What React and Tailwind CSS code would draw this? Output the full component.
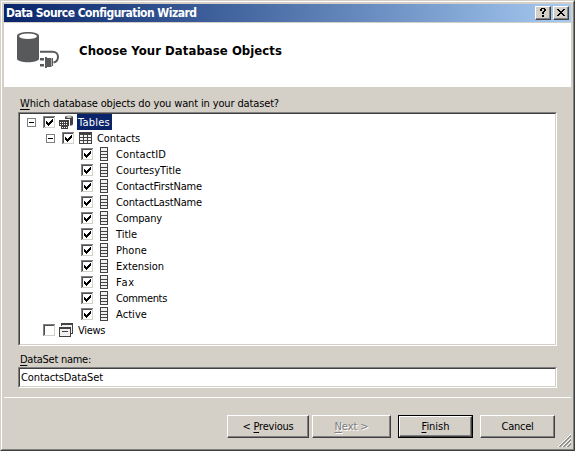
import React from "react";

const columns = [
  ["ContactID", "w-[50px]"],
  ["CourtesyTitle", "w-[65px]"],
  ["ContactFirstName", "w-[86px]"],
  ["ContactLastName", "w-[86px]"],
  ["Company", "w-[46px]"],
  ["Title", "w-[21px]"],
  ["Phone", "w-[31px]"],
  ["Extension", "w-[48px]"],
  ["Fax", "w-[19px]"],
  ["Comments", "w-[51px]"],
  ["Active", "w-[31px]"],
];

function Check({ on = true }) {
  return (
    <svg width="12" height="12" viewBox="0 0 12 12" shapeRendering="crispEdges" className="shrink-0">
      <path fill="#d4d0c8" d="M0 0h12v12H0z" />
      <path fill="#808080" d="M0 0h12v1H1v11H0z" />
      <path fill="#fff" d="M1 1h10v10H1z" />
      <path fill="#505050" d="M1 1h10v1H2v9H1z" />
      {on && <path fill="#000" d="M3 5h1v3H3zM4 6h1v3H4zM5 7h1v3H5zM6 6h1v3H6zM7 5h1v3H7zM8 4h1v3H8zM9 3h1v3H9z" />}
    </svg>
  );
}

function Expander() {
  return (
    <svg width="9" height="9" viewBox="0 0 9 9" shapeRendering="crispEdges" className="shrink-0">
      <path d="M.5.5h8v8h-8z" fill="#fff" stroke="#808080" />
      <path d="M2 4h5v1H2z" />
    </svg>
  );
}

function ColumnIcon() {
  return (
    <svg width="8" height="14" viewBox="0 0 8 14" shapeRendering="crispEdges" className="shrink-0">
      <path fill="#f0f0f0" d="M0 0h8v14H0z" />
      <path fill="#424242" fillRule="evenodd" d="M0 0h8v14H0zM1 1v3h6V1zM1 5v2h6V5zM1 8v2h6V8zM1 11v2h6v-2z" />
    </svg>
  );
}

function TablesIcon() {
  return (
    <svg width="15" height="14" viewBox="0 0 15 14" className="shrink-0">
      <path fill="#424242" d="M6 2C6 .2 14 .2 14 2v7c0 1-1.500 1.500-3 1.500V4H6z" />
      <ellipse cx="10" cy="2" rx="3" ry=".8" fill="#fff" />
      <g shapeRendering="crispEdges">
        <path fill="#424242" d="M0 5h10v6H9v3H2v-3H0z" />
        <path fill="#fff" d="M1 7h1v1H1zm2 0h1v1H3zm2 0h1v1H5zm2 0h1v1H7zM1 9h1v1H1zm2 0h1v1H3zm2 0h1v1H5zm2 0h1v1H7zM3 12h1v1H3zm2 0h1v1H5zm2 0h1v1H7z" />
      </g>
    </svg>
  );
}

function TableIcon() {
  return (
    <svg width="13" height="12" viewBox="0 0 13 12" shapeRendering="crispEdges" className="shrink-0">
      <path fill="#424242" d="M0 0h13v12H0z" />
      <path fill="#f4f4f4" d="M1 3h3v2H1zm4 0h3v2H5zm4 0h3v2H9zM1 6h3v2H1zm4 0h3v2H5zm4 0h3v2H9zM1 9h3v2H1zm4 0h3v2H5zm4 0h3v2H9z" />
    </svg>
  );
}

function ViewsIcon() {
  return (
    <svg width="14" height="14" viewBox="0 0 14 14" shapeRendering="crispEdges" className="shrink-0">
      <path fill="#f0f0f0" d="M2 0h12v11H2zM0 4h12v10H0z" />
      <path fill="#424242" fillRule="evenodd" d="M2 0h12v11h-2v-1h1V2H3v1H2zM0 4h12v10H0zM1 6v7h10V6z" />
      <path fill="#424242" d="M3 8h6v1H3z" />
    </svg>
  );
}

function DatabaseIcon() {
  return (
    <svg width="43" height="37" viewBox="0 0 43 37" className="shrink-0">
      <path fill="#58595b" d="M0 4C0-1.2 22-1.2 22 4v22.500c0 5-22 5-22 0z" />
      <ellipse cx="11" cy="4.300" rx="9" ry="2.800" fill="#fff" />
      <path d="M23 19.800h12.500c3.500 0 5.500 2.200 5.500 5s-1.500 5.200-4.500 5.700" fill="none" stroke="#58595b" strokeWidth="2" />
      <path fill="#58595b" d="M23 26h4v2.500h-4zM23 32h4v2.500h-4zM28 25h2v1h4.500v9H30v1h-2zM35 26h1v8h-1z" />
    </svg>
  );
}

/* One line of text stretched to an exact advance width. */
function Label({ children, w, bold, size = "text-[11px]", className = "" }) {
  const ref = React.useRef(null);
  const [gap, setGap] = React.useState(0);
  React.useLayoutEffect(() => {
    const el = ref.current;
    setGap((el.parentElement.clientWidth - el.getBoundingClientRect().width) / el.textContent.length);
  }, []);
  return (
    <span className={`inline-block shrink-0 whitespace-pre ${w} ${size} ${bold ? "font-bold" : ""} ${className}`}>
      <span ref={ref} style={{ letterSpacing: gap }}>{children}</span>
    </span>
  );
}

function Key({ children }) {
  return <span className="underline decoration-1 underline-offset-2">{children}</span>;
}

function Button({ children, disabled, primary, className }) {
  return (
    <button
      disabled={disabled}
      className={`flex h-[23px] items-center justify-center ${primary ? "border border-black" : ""} ${className}`}
    >
      <span className="flex h-full w-full items-center justify-center border border-t-white border-l-white border-r-[#404040] border-b-[#404040] shadow-[inset_-1px_-1px_#808080]">
        {children}
      </span>
    </button>
  );
}

export default function App() {
  return (
    <div className="flex h-[451px] w-[575px] flex-col overflow-hidden border border-t-[#d4d0c8] border-l-[#d4d0c8] border-r-[#404040] border-b-[#404040] bg-[#d4d0c8] font-['DejaVu_Sans_Condensed','DejaVu_Sans',sans-serif] leading-[16px] text-black">
      <div className="relative flex h-full flex-col border border-t-white border-l-white border-r-[#808080] border-b-[#808080] p-[2px]">
        <header className="flex h-[18px] shrink-0 items-center bg-linear-to-r from-[#0a246a] to-[#a6caf0] pr-[2px] pl-[2px]">
          <Label w="w-[190px]" bold size="text-[12px]" className="text-white">Data Source Configuration Wizard</Label>
          <div className="ml-auto flex gap-[2px]">
            <button aria-label="Help" className="flex h-[14px] w-4 items-center justify-center border border-t-white border-l-white border-r-[#404040] border-b-[#404040] bg-[#d4d0c8] pb-px shadow-[inset_-1px_-1px_#808080]">
              <svg width="8" height="9" viewBox="0 0 8 9" shapeRendering="crispEdges">
                <path d="M2 0h4v1H2zM1 1h2v2H1zM5 1h2v2H5zM4 3h2v1H4zM3 4h2v2H3zM3 7h2v2H3z" />
              </svg>
            </button>
            <button aria-label="Close" className="flex h-[14px] w-4 items-center justify-center border border-t-white border-l-white border-r-[#404040] border-b-[#404040] bg-[#d4d0c8] pb-px shadow-[inset_-1px_-1px_#808080]">
              <svg width="8" height="7" viewBox="0 0 8 7" shapeRendering="crispEdges">
                <path d="M0 0h2v1H0zM6 0h2v1H6zM1 1h2v1H1zM5 1h2v1H5zM2 2h4v1H2zM3 3h2v1H3zM2 4h4v1H2zM1 5h2v1H1zM5 5h2v1H5zM0 6h2v1H0zM6 6h2v1H6z" />
              </svg>
            </button>
          </div>
        </header>
        <section className="mt-px flex h-16 shrink-0 items-start bg-white pt-[9px] pl-[13px]">
          <DatabaseIcon />
          <Label w="w-[203px]" bold size="text-[13px]" className="mt-[11px] ml-[19px]">Choose Your Database Objects</Label>
        </section>
        <main className="flex flex-col px-[14px] pt-[9px]">
          <Label w="w-[259px]" className="ml-[2px]"><Key>W</Key>hich database objects do you want in your dataset?</Label>
          <div className="h-[234px] w-[539px] border border-t-[#808080] border-l-[#808080] border-r-white border-b-white">
            <div className="h-full border border-t-[#404040] border-l-[#404040] border-r-[#d4d0c8] border-b-[#d4d0c8] bg-white">
              <div className="flex h-4 items-center pl-[7px]">
                <Expander />
                <span className="ml-[7px] -mt-px flex"><Check /></span>
                <span className="ml-1 flex"><TablesIcon /></span>
                <span className="ml-[3px] flex h-4 w-[35px] bg-[#0a246a] pl-px text-white"><Label w="w-[32px]" className="pt-px">Tables</Label></span>
              </div>
              <div className="flex h-4 items-center pl-[26px]">
                <Expander />
                <span className="ml-[7px] -mt-px flex"><Check /></span>
                <span className="ml-[5px] flex"><TableIcon /></span>
                <Label w="w-[43px]" className="ml-[5px] pt-[2px]">Contacts</Label>
              </div>
              {columns.map(([name, width]) => (
                <div key={name} className="flex h-4 items-center pl-[61px]">
                  <span className="-mt-px flex"><Check /></span>
                  <span className="ml-[7px] flex"><ColumnIcon /></span>
                  <Label w={width} className="ml-2 pt-[2px]">{name}</Label>
                </div>
              ))}
              <div className="flex h-4 items-center pl-[23px]">
                <span className="-mt-px flex"><Check on={false} /></span>
                <span className="mr-px ml-1 flex"><ViewsIcon /></span>
                <Label w="w-[27px]" className="ml-1 pt-[2px]">Views</Label>
              </div>
            </div>
          </div>
          <Label w="w-[71px]" className="-mb-px mt-[6px] ml-[2px]"><Key>D</Key>ataSet name:</Label>
          <div className="h-[21px] w-[539px] border border-t-[#808080] border-l-[#808080] border-r-white border-b-white">
            <div className="flex h-full items-center border border-t-[#404040] border-l-[#404040] border-r-[#d4d0c8] border-b-[#d4d0c8] bg-white pl-px">
              <Label w="w-[82px]">ContactsDataSet</Label>
            </div>
          </div>
        </main>
        <div className="mt-[9px] h-px shrink-0 bg-white" />
        <footer className="mt-[17px] flex pl-[223px]">
          <Button className="w-[82px]"><Label w="w-[51px]" className="pt-px">{"< "}<Key>P</Key>revious</Label></Button>
          <Button disabled className="ml-[3px] w-[79px]"><Label w="w-[34px]" className="pt-px text-[#808080] [text-shadow:1px_1px_#fff]"><Key>N</Key>{"ext >"}</Label></Button>
          <Button primary className="ml-[7px] w-[75px]"><Label w="w-[28px]" className="pt-px"><Key>F</Key>inish</Label></Button>
          <Button className="ml-[7px] w-[75px]"><Label w="w-[32px]" className="pt-px">Cancel</Label></Button>
        </footer>
        <svg className="absolute right-[2px] bottom-[2px]" width="13" height="13" viewBox="0 0 13 13">
          <path d="M0 13L13 0M4 13l9-9M8 13l5-5" stroke="#fff" />
          <path d="M1 13L13 1M2 13L13 2M5 13l8-8M6 13l7-7M9 13l4-4M10 13l3-3" stroke="#808080" strokeWidth=".8" />
        </svg>
      </div>
    </div>
  );
}
